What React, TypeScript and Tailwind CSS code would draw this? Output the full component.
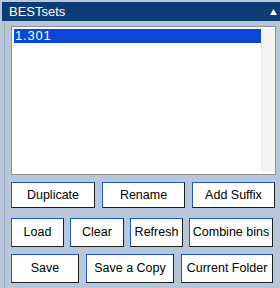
import React from "react";

const btn =
  "h-full bg-white border border-t-[#1f52d6] border-l-[#1f52d6] border-r-[#1e1e1e] border-b-[#1e1e1e] text-[12.5px] text-black flex items-center justify-center";

export default function App() {
  return (
    <div
      className="w-[280px] h-[288px] bg-[#b7c6d9] relative overflow-hidden"
      style={{ fontFamily: '"Liberation Sans", Arial, sans-serif' }}
    >
      <div className="ml-[2px] mt-[2px] h-[19px] bg-[#0e3c74] flex items-center justify-between pl-[7px] pr-[3px]">
        <span className="text-white text-[13px] leading-none">BESTsets</span>
        <svg width="7" height="6" viewBox="0 0 7 6">
          <polygon points="3.5,0 7,6 0,6" fill="white" />
        </svg>
      </div>
      <div className="flex">
        <div className="w-[4px]" />
        <div className="w-[1px] bg-[#9aabc2] h-[267px]" />
        <div className="flex-1 pl-[6px] pr-[4px] pt-[5px]">
          <div className="h-[149px] w-[265px] border border-[#8f8f8f] bg-white flex p-[2px] pr-0">
            <div className="flex-1">
              <div className="h-[14px] bg-[#0a49d6] text-white text-[13px] leading-[14px] pl-[1px] tracking-[0.8px]">
                1.301
              </div>
            </div>
            <div className="w-[14px] bg-[#f4f4f4] border-l border-[#ececec]" />
          </div>
          <div className="flex gap-[7px] mt-[7px] h-[26px]">
            <div className={btn + " w-[84px]"}>Duplicate</div>
            <div className={btn + " w-[83px]"}>Rename</div>
            <div className={btn + " w-[83px]"}>Add Suffix</div>
          </div>
          <div className="flex gap-[6px] mt-[10px] h-[29px]">
            <div className={btn + " w-[53px]"}>Load</div>
            <div className={btn + " w-[54px]"}>Clear</div>
            <div className={btn + " w-[53px]"}>Refresh</div>
            <div className={btn + " w-[84px]"}>Combine bins</div>
          </div>
          <div className="flex gap-[7px] mt-[7px] h-[29px]">
            <div className={btn + " w-[68px]"}>Save</div>
            <div className={btn + " w-[88px]"}>Save a Copy</div>
            <div className={btn + " w-[92px]"}>Current Folder</div>
          </div>
        </div>
      </div>
    </div>
  );
}
